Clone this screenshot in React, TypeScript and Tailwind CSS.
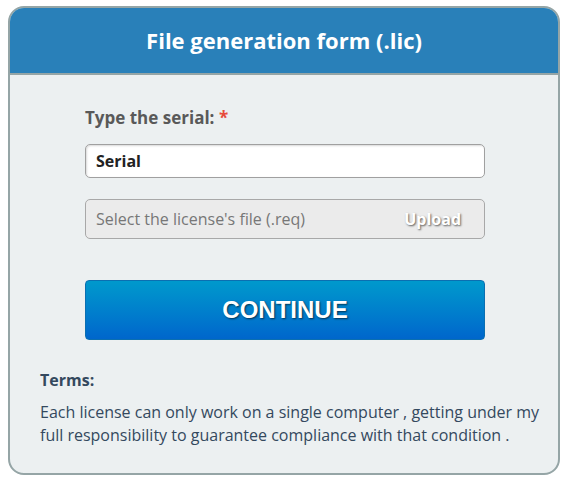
export default function App() {
  return (
    <div className="min-h-[479px] w-[565px] bg-white pt-[6px] pl-2 font-['Open_Sans',sans-serif]">
      <div className="w-[552px] overflow-hidden rounded-2xl border-2 border-[#95a5a6] bg-[#ecf0f1]">
        <div className="-mx-[2px] -mt-[2px] flex h-[69px] items-center justify-center border-b-2 border-[#95a5a6] bg-[#2980b9] pt-[2px]">
          <h1 className="text-[22px] font-bold text-white">File generation form (.lic)</h1>
        </div>

        <div className="px-[75px] pt-[32px]">
          <label className="block text-[17px] font-bold leading-[22px] text-[#595959]">
            Type the serial: <span className="text-[#e74c3c]">*</span>
          </label>
          <input
            defaultValue="Serial"
            className="mt-[15px] block h-[34px] w-[400px] rounded-[5px] border border-[#a0a0a0] bg-white px-[10px] text-[16px] font-bold text-[#222] shadow-[inset_1px_1px_2px_rgba(0,0,0,0.15)] outline-none"
          />
          <div className="mt-[21px] flex h-[40px] w-[400px] items-center justify-between rounded-[5px] border border-[#a8a8a8] bg-[#ebebeb] pr-[23px] pl-[10px]">
            <span className="text-[16px] text-[#777]">Select the license's file (.req)</span>
            <span className="text-[16px] font-bold text-white [text-shadow:1px_1px_2px_rgba(0,0,0,0.6)]">
              Upload
            </span>
          </div>
          <button className="mt-[41px] block h-[60px] w-[400px] rounded-[4px] border border-[#0b6fb1] bg-gradient-to-b from-[#0099cc] to-[#0066cc] font-['Liberation_Sans',Arial,sans-serif] text-[24px] font-bold text-white [text-shadow:1px_1px_2px_rgba(0,0,0,0.6)]">
            CONTINUE
          </button>
        </div>

        <div className="pt-[29px] pr-[8px] pb-[26px] pl-[30px] text-[#34495e]">
          <p className="text-[16px] font-bold leading-[22px]">Terms:</p>
          <p className="mt-[10px] text-[16px] leading-[23px]">
            Each license can only work on a single computer , getting under my full responsibility to guarantee compliance
            with that condition .
          </p>
        </div>
      </div>
    </div>
  );
}
